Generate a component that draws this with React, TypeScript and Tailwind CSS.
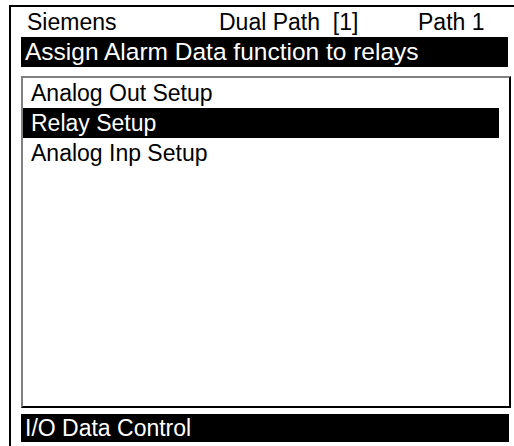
const ITEMS = ["Analog Out Setup", "Relay Setup", "Analog Inp Setup"];
const SELECTED = 1;

export default function App() {
  return (
    <div
      className="h-[446px] w-[514px] overflow-hidden bg-white text-[23px] leading-none text-black"
      style={{ fontFamily: '"Liberation Sans", Arial, sans-serif' }}
    >
      <div className="ml-[9px] mt-[5px] flex h-[441px] flex-col border-l-2 border-t-2 border-black pl-[10px] pr-[3px]">
        <div className="flex h-[30px] items-center whitespace-pre">
          <span className="ml-[6px] w-[192px]">Siemens</span>
          <span className="w-[199px]">Dual Path  [1]</span>
          <span>Path 1</span>
        </div>
        <div className="mr-[3px] flex h-[30px] items-center bg-black pl-[4px] text-[24.5px] text-white">
          Assign Alarm Data function to relays
        </div>
        <div className="mt-[9px] flex h-[332px] flex-col border-2 border-b-black border-l-[#808080] border-r-black border-t-[#808080] pr-[10px]">
          {ITEMS.map((item, i) => (
            <div
              key={item}
              className={`flex h-[30px] items-center pl-[8px] ${i === SELECTED ? "bg-black text-white" : ""}`}
            >
              {item}
            </div>
          ))}
        </div>
        <div className="mr-[2px] mt-[6px] flex h-[28px] items-center bg-black pl-[4px] text-white">I/O Data Control</div>
      </div>
    </div>
  );
}
